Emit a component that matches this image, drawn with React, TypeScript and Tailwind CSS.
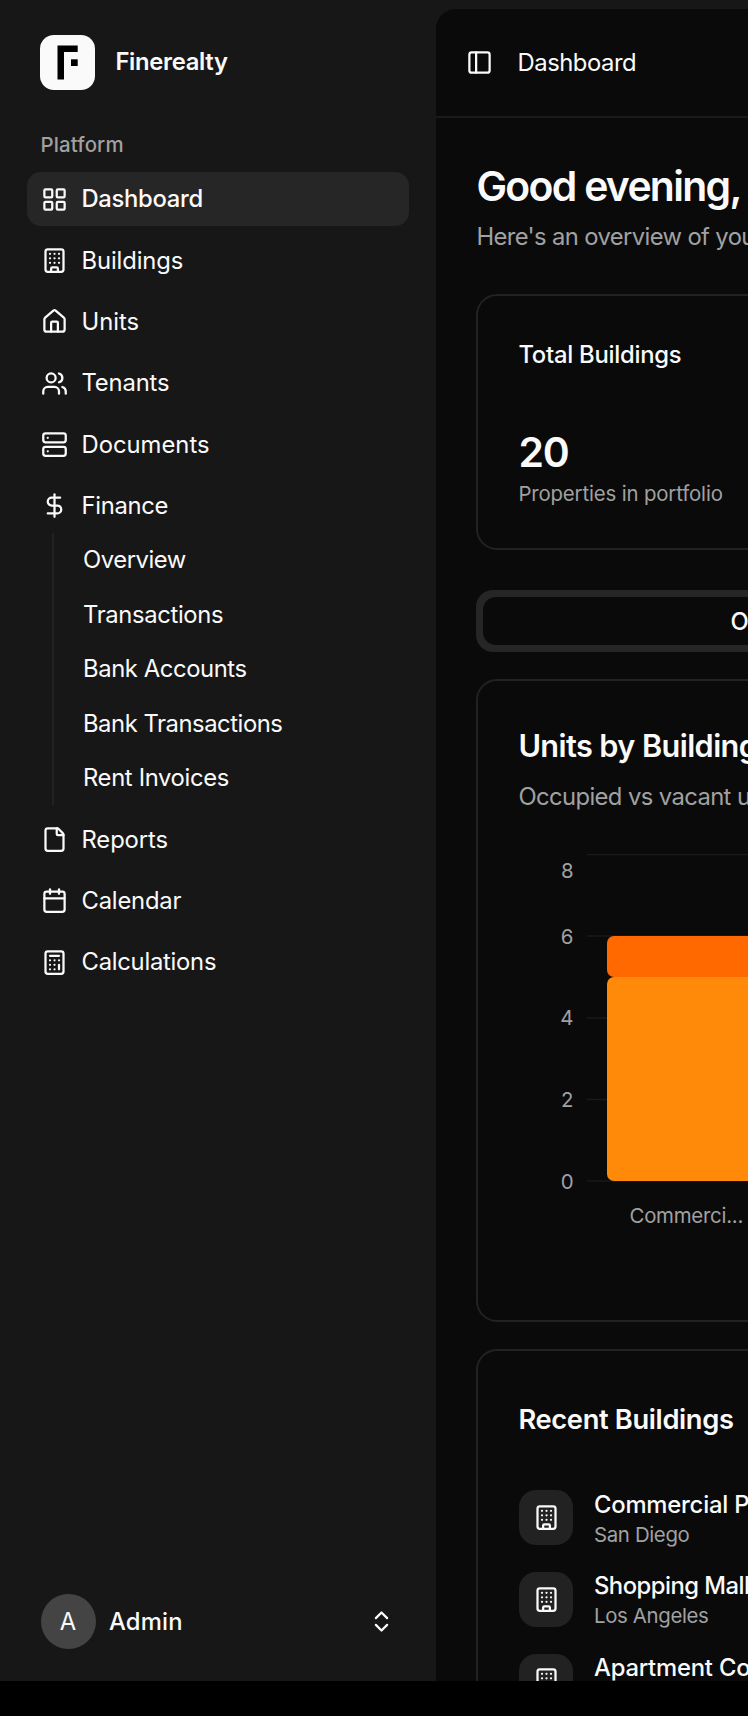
import {
  Building,
  Calculator,
  Calendar,
  ChevronsUpDown,
  DollarSign,
  File,
  House,
  LayoutGrid,
  PanelLeft,
  Server,
  Users,
  type LucideIcon,
} from "lucide-react";
import clsx from "clsx";

type NavItem = {
  label: string;
  icon: LucideIcon;
  tracking: string;
  active?: boolean;
  children?: { label: string; tracking: string }[];
};

const navItems: NavItem[] = [
  { label: "Dashboard", icon: LayoutGrid, tracking: "tracking-[-0.3px]", active: true },
  { label: "Buildings", icon: Building, tracking: "tracking-[-0.12px]" },
  { label: "Units", icon: House, tracking: "tracking-[0px]" },
  { label: "Tenants", icon: Users, tracking: "tracking-[-0.15px]" },
  { label: "Documents", icon: Server, tracking: "tracking-[0px]" },
  {
    label: "Finance",
    icon: DollarSign,
    tracking: "tracking-[-0.3px]",
    children: [
      { label: "Overview", tracking: "tracking-[-0.45px]" },
      { label: "Transactions", tracking: "tracking-[-0.35px]" },
      { label: "Bank Accounts", tracking: "tracking-[-0.4px]" },
      { label: "Bank Transactions", tracking: "tracking-[-0.45px]" },
      { label: "Rent Invoices", tracking: "tracking-[-0.35px]" },
    ],
  },
  { label: "Reports", icon: File, tracking: "tracking-[-0.1px]" },
  { label: "Calendar", icon: Calendar, tracking: "tracking-[-0.2px]" },
  { label: "Calculations", icon: Calculator, tracking: "tracking-[-0.25px]" },
];

const recentBuildings = [
  { name: "Commercial Plaza", city: "San Diego", tracking: "tracking-[-0.2px]" },
  { name: "Shopping Mall", city: "Los Angeles", tracking: "tracking-[-0.5px]" },
  { name: "Apartment Complex", city: "San Francisco", tracking: "tracking-[-0.2px]" },
];

const ticks = [
  { value: 8, y: 0.5, labelY: 23.5 },
  { value: 6, y: 82, labelY: 89.5 },
  { value: 4, y: 164, labelY: 171 },
  { value: 2, y: 245.5, labelY: 253 },
  { value: 0, y: 327, labelY: 334.5 },
];

const Logo = () => (
  <div className="size-[55px] shrink-0 rounded-[14px] bg-[#fafafa]">
    <svg viewBox="0 0 55 55" className="size-full" fill="#000">
      <path d="M17.5 10.5H37.7V17H24V44.5H17.5Z" />
      <path d="M31 24.3H37.7V31H31Z" />
    </svg>
  </div>
);

const Sidebar = () => (
  <aside className="flex w-[436px] shrink-0 flex-col px-[27px] pt-[35.4px] pb-[32px]">
    <div className="flex items-center gap-5 px-[13.4px]">
      <Logo />
      <span className="pb-[2px] text-[23.8px] font-semibold tracking-[-0.3px]">Finerealty</span>
    </div>

    <div className="mt-[27.6px] flex h-[54px] items-center px-[13.5px] text-[20.4px] font-medium tracking-[0.15px] text-[#a1a1a1]">
      Platform
    </div>
    <ul className="flex flex-col gap-[6.8px]">
      {navItems.map(({ label, icon: Icon, tracking, active, children }) => (
        <li key={label}>
          <a
            className={clsx(
              "flex h-[54.5px] items-center gap-[13.5px] rounded-[14px] px-[14px]",
              tracking,
              active && "bg-[#262626] font-medium"
            )}
          >
            <Icon className="size-[27px]" />
            <span>{label}</span>
          </a>
          {children && (
            <ul className="ml-[25px] border-l-2 border-[#222222] pl-[29px]">
              {children.map((child) => (
                <li key={child.label} className={clsx("flex h-[54.5px] items-center", child.tracking)}>
                  {child.label}
                </li>
              ))}
            </ul>
          )}
        </li>
      ))}
    </ul>

    <div className="mt-auto flex items-center px-[13.5px]">
      <div className="flex size-[55px] items-center justify-center rounded-full bg-[#444444]">A</div>
      <span className="ml-[13.5px] font-medium tracking-[0.15px]">Admin</span>
      <ChevronsUpDown className="mr-px ml-auto size-[27px]" />
    </div>
  </aside>
);

const UnitsChart = () => (
  <svg width="400" height="420" className="mt-[38.5px] block" fontSize="20.4">
    {ticks.map((tick) => (
      <g key={tick.value}>
        <line x1="69" x2="400" y1={tick.y} y2={tick.y} stroke="#1a1a1a" strokeWidth="1.7" />
        <text x="55.5" y={tick.labelY} textAnchor="end" fill="#a1a1a1">
          {tick.value}
        </text>
      </g>
    ))}
    <rect x="89" y="82" width="340" height="41" rx="7" fill="#ff6900" />
    <rect x="89" y="123" width="340" height="204" rx="7" fill="#ff8a0a" />
    <text x="111.5" y="369" fill="#a1a1a1" letterSpacing="-0.25">
      Commerci...
    </text>
  </svg>
);

const Content = () => (
  <main className="mt-[9px] min-w-0 flex-1 overflow-hidden rounded-tl-[20px] bg-[#0a0a0a] whitespace-nowrap">
    <header className="flex h-[109px] items-center border-b-2 border-[#1a1a1a] pb-px pl-[30px]">
      <PanelLeft className="size-[27px] shrink-0" />
      <span className="mt-[2px] ml-[24.5px] tracking-[-0.45px]">Dashboard</span>
    </header>

    <div className="w-[900px] pt-[43px] pl-[40.4px]">
      <h1 className="text-[40.9px] leading-[50px] font-semibold tracking-[-1.7px]">Good evening, Admin</h1>
      <p className="mt-[8px] leading-[36px] tracking-[-0.62px] text-[#a1a1a1]">
        Here's an overview of your properties
      </p>

      <section className="mt-[39px] h-[256px] rounded-[21px] border-2 border-[#222222] pt-[40px] pl-[40px]">
        <h3 className="leading-[38px] font-medium tracking-[-0.25px]">Total Buildings</h3>
        <p className="mt-[48px] text-[40.9px] leading-[60px] font-semibold tracking-[-1.2px]">20</p>
        <p className="text-[20.4px] leading-[24px] tracking-[-0.15px] text-[#a1a1a1]">
          Properties in portfolio
        </p>
      </section>

      <div className="mt-[40px] h-[62px] rounded-[17px] bg-[#262626] p-[7px]">
        <div className="flex h-full items-center rounded-[13px] bg-[#0a0a0a] pt-px pl-[247px] font-medium">
          Overview
        </div>
      </div>

      <section className="mt-[27px] h-[643px] rounded-[21px] border-2 border-[#222222] pt-[45px] pl-[40px]">
        <h2 className="text-[30.7px] leading-[40px] font-semibold tracking-[-0.6px]">Units by Building</h2>
        <p className="mt-[13px] leading-[36px] tracking-[-0.6px] text-[#a1a1a1]">Occupied vs vacant units</p>
        <UnitsChart />
      </section>

      <section className="mt-[27px] h-[500px] rounded-[21px] border-2 border-[#222222] pt-[49.5px] pl-[40px]">
        <h2 className="text-[27.3px] leading-[38px] font-semibold tracking-[-0.35px]">Recent Buildings</h2>
        <ul className="mt-[49px] flex flex-col gap-[21.7px]">
          {recentBuildings.map((building) => (
            <li key={building.name} className="flex items-center gap-[20.5px]">
              <div className="ml-[0.4px] flex size-[54.7px] items-center justify-center rounded-[17px] bg-[#222222]">
                <Building className="size-[27px]" />
              </div>
              <div className="flex flex-col">
                <span className={clsx("leading-[33px] font-medium", building.tracking)}>{building.name}</span>
                <span className="text-[20.4px] leading-[27px] tracking-[-0.35px] text-[#a1a1a1]">
                  {building.city}
                </span>
              </div>
            </li>
          ))}
        </ul>
      </section>
    </div>
  </main>
);

export default function App() {
  return (
    <div className="h-[1716px] overflow-hidden bg-black">
      <div className="flex h-[1681px] overflow-hidden bg-[#171717] font-[Inter,sans-serif] text-[23.8px] text-[#fafafa]">
        <Sidebar />
        <Content />
      </div>
    </div>
  );
}
